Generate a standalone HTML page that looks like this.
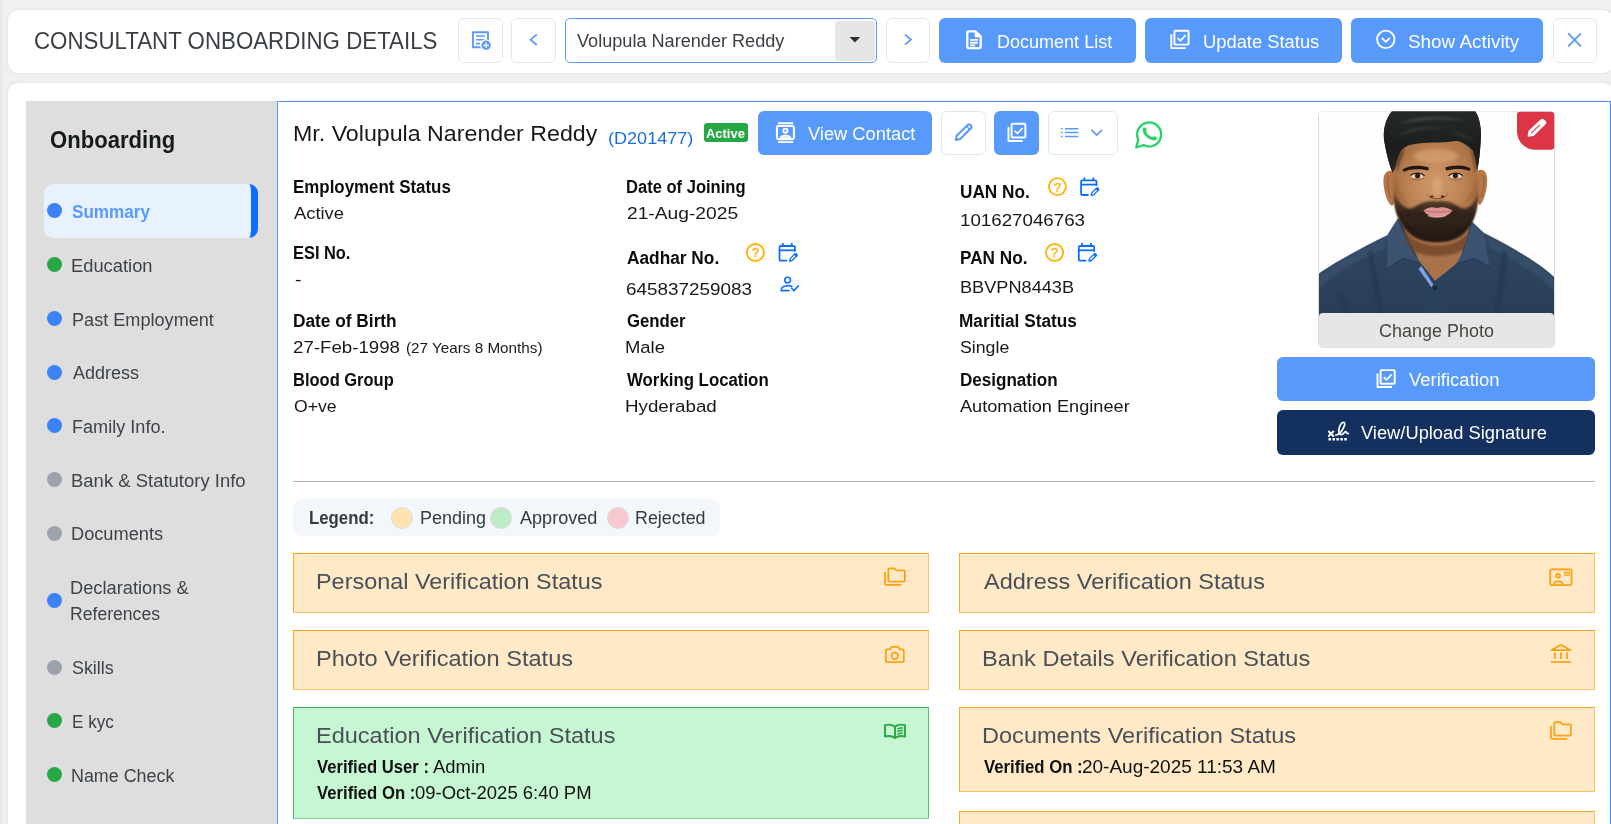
<!DOCTYPE html>
<html lang="en">
<head>
<meta charset="utf-8">
<title>Consultant Onboarding Details</title>
<style>
*{box-sizing:border-box;margin:0;padding:0}
html,body{width:1611px;height:824px;overflow:hidden}
body{background:#f0f0f0;font-family:"Liberation Sans",sans-serif;color:#212529;position:relative}
.a{position:absolute}
.t{position:absolute;white-space:nowrap;line-height:1;transform-origin:0 50%}
.card{position:absolute;background:#fff;border:1px solid #e8e8f2;border-radius:11px;box-shadow:0 0 1px #d9d9e6}
.bw{position:absolute;background:#fff;border:1px solid #e3e7f3;border-radius:6px}
.bb{position:absolute;background:#5899fc;border-radius:6px}
.dot{position:absolute;width:15px;height:15px;border-radius:50%}
.g{background:#28a745}.bl{background:#3b82f6}.gr{background:#9ca3af}
.vc{position:absolute;background:#ffe9c6;border:1px solid #ffc266;border-top-color:#f9a21a;border-left-color:#fbab2e}
.ok{background:#c6f6d2;border-color:#7fd495;border-top-color:#36aa55;border-left-color:#4cb868;border-right-color:#58bf73}
.lc{position:absolute;width:22px;height:22px;border-radius:50%;border:1px solid #dcdcdc}
svg{position:absolute;overflow:visible}
</style>
</head>
<body>
<!-- TOP BAR -->
<div class="a" style="left:0;top:0;width:4px;height:824px;background:linear-gradient(90deg,#e7e7e7,#efefef)"></div>
<div class="card" style="left:7px;top:9px;width:1607px;height:65px"></div>
<div class="bw" style="left:458px;top:18px;width:44.5px;height:45px"></div>
<div class="bw" style="left:511px;top:18px;width:44.6px;height:45px"></div>
<div class="a" style="left:565px;top:18px;width:312px;height:45px;border:1.5px solid #5899fc;border-radius:5px;background:#fff"></div>
<div class="a" style="left:835px;top:21px;width:40px;height:40px;background:#e6e6e6;border-radius:4px"></div>
<div class="bw" style="left:886px;top:18px;width:44px;height:45px"></div>
<div class="bb" style="left:939px;top:18px;width:197px;height:45px"></div>
<div class="bb" style="left:1145px;top:18px;width:197px;height:45px"></div>
<div class="bb" style="left:1351px;top:18px;width:192px;height:45px"></div>
<div class="bw" style="left:1552.5px;top:18px;width:44.5px;height:45px"></div>

<!-- MAIN CARD -->
<div class="card" style="left:7px;top:82px;width:1607px;height:760px"></div>

<!-- SIDEBAR -->
<div class="a" style="left:26px;top:101px;width:251px;height:723px;background:#dedede"></div>
<div class="a" style="left:44px;top:184px;width:214px;height:54px;background:#e8f1fe;border-radius:9px;border-right:7px solid #0d6efd"></div>
<div class="dot bl" style="left:47px;top:203px"></div>
<div class="dot g" style="left:47px;top:257px"></div>
<div class="dot bl" style="left:47px;top:311px"></div>
<div class="dot bl" style="left:47px;top:364.5px"></div>
<div class="dot bl" style="left:47px;top:418px"></div>
<div class="dot gr" style="left:47px;top:472px"></div>
<div class="dot gr" style="left:47px;top:525.5px"></div>
<div class="dot bl" style="left:46.5px;top:593px"></div>
<div class="dot gr" style="left:47px;top:659.5px"></div>
<div class="dot g" style="left:47px;top:713px"></div>
<div class="dot g" style="left:47px;top:767px"></div>

<!-- CONTENT PANEL -->
<div class="a" style="left:277px;top:101px;width:1334px;height:740px;border:1px solid #5899fc;border-right-color:#3d8bff;background:#fff"></div>
<div class="bb" style="left:758px;top:111px;width:174px;height:44px"></div>
<div class="bw" style="left:941px;top:111px;width:45px;height:44px"></div>
<div class="bb" style="left:994px;top:111px;width:45px;height:44px"></div>
<div class="bw" style="left:1048px;top:111px;width:70px;height:44px"></div>
<div class="a" style="left:704px;top:123px;width:44px;height:19px;background:#28a745;border-radius:3px"></div>

<!-- photo frame -->
<div class="a" style="left:1318px;top:110.5px;width:237px;height:237px;border:1px solid #dcdcdc;border-radius:5px;background:#fff"></div>
<div class="bb" style="left:1277px;top:357px;width:318px;height:44px"></div>
<div class="a" style="left:1277px;top:410px;width:318px;height:45px;background:#14305f;border-radius:6px"></div>

<!-- hr + legend -->
<div class="a" style="left:293px;top:481px;width:1302px;height:1px;background:#b5b5b5"></div>
<div class="a" style="left:293px;top:499px;width:427px;height:37px;background:#f3f6fa;border-radius:9px"></div>
<div class="lc" style="left:391px;top:506.5px;background:#ffe4ae"></div>
<div class="lc" style="left:490px;top:506.5px;background:#bcecc6"></div>
<div class="lc" style="left:606.5px;top:506.5px;background:#f8c9d1"></div>

<!-- verification cards -->
<div class="vc" style="left:293px;top:553px;width:636px;height:59.5px"></div>
<div class="vc" style="left:959px;top:553px;width:636px;height:59.5px"></div>
<div class="vc" style="left:293px;top:630px;width:636px;height:59.5px"></div>
<div class="vc" style="left:959px;top:630px;width:636px;height:59.5px"></div>
<div class="vc ok" style="left:293px;top:707px;width:636px;height:111.5px"></div>
<div class="vc" style="left:959px;top:707px;width:636px;height:85.2px"></div>
<div class="vc" style="left:959px;top:811.2px;width:636px;height:60px"></div>
<svg width="1611" height="824" viewBox="0 0 1611 824" style="left:0;top:0">
<defs>
  <clipPath id="pclip"><rect x="1319" y="111.5" width="235" height="212" rx="4"/></clipPath>
  <radialGradient id="skin" cx="0.5" cy="0.45" r="0.6">
    <stop offset="0" stop-color="#d09a6a"/><stop offset="0.5" stop-color="#bf8556"/><stop offset="0.85" stop-color="#a87044"/><stop offset="1" stop-color="#8e5c36"/>
  </radialGradient>
  <linearGradient id="shirt" x1="0" y1="0" x2="0" y2="1">
    <stop offset="0" stop-color="#31475f"/><stop offset="1" stop-color="#293d56"/>
  </linearGradient>
  <linearGradient id="beard" gradientUnits="userSpaceOnUse" x1="0" y1="186" x2="0" y2="243">
    <stop offset="0" stop-color="#6a4730" stop-opacity="0.25"/><stop offset="0.22" stop-color="#4a3224" stop-opacity="0.8"/><stop offset="0.45" stop-color="#33241c"/><stop offset="1" stop-color="#271b15"/>
  </linearGradient>
  <linearGradient id="hairg" x1="0" y1="0" x2="0" y2="1">
    <stop offset="0" stop-color="#262a27"/><stop offset="0.6" stop-color="#1b1e1c"/><stop offset="1" stop-color="#2a2620"/>
  </linearGradient>
  <filter id="soft" x="-10%" y="-10%" width="120%" height="120%"><feGaussianBlur stdDeviation="0.9"/></filter>
  <filter id="soft2" x="-15%" y="-15%" width="130%" height="130%"><feGaussianBlur stdDeviation="1.8"/></filter>
  <filter id="soft3" x="-10%" y="-10%" width="120%" height="120%"><feGaussianBlur stdDeviation="0.5"/></filter>
</defs>
<g clip-path="url(#pclip)">
  <rect x="1319" y="111" width="235" height="215" fill="#fefefe"/>
  <!-- shirt body -->
  <path d="M1319 273.5C1334 263 1362 247.5 1388 235L1398 219L1471 222L1484 233C1508 245 1538 262 1554 277V326H1319Z" fill="url(#shirt)"/>
  <!-- shirt shading / folds -->
  <path d="M1319 275C1336 263 1362 248 1387 236L1385 249C1360 258 1337 272 1319 288Z" fill="#3a5270" opacity="0.7" filter="url(#soft)"/>
  <path d="M1554 278C1538 263 1508 246 1485 234L1490 249C1514 258 1540 276 1554 292Z" fill="#3a5270" opacity="0.7" filter="url(#soft)"/>
  <path d="M1372 250C1376 270 1380 292 1384 314H1378C1374 292 1370 270 1368 252Z" fill="#233850" opacity="0.7" filter="url(#soft)"/>
  <path d="M1502 250C1500 270 1497 292 1494 314H1500C1504 292 1506 270 1507 252Z" fill="#233850" opacity="0.7" filter="url(#soft)"/>
  <path d="M1340 292C1346 300 1350 308 1352 314H1346C1344 308 1340 300 1336 296Z" fill="#22364e" opacity="0.6" filter="url(#soft)"/>
  <!-- neck -->
  <path d="M1402 224L1470 226L1459 262L1435 281L1420 263Z" fill="#a8734a"/>
  <path d="M1402 228C1416 250 1456 252 1470 230L1465 248C1452 259 1422 259 1406 247Z" fill="#6e4328" opacity="0.75" filter="url(#soft)"/>
  <!-- collar -->
  <path d="M1398 218L1387.6 234.6L1387.6 268.6L1403 258.5L1420.8 263C1410 250 1402 236 1398 218Z" fill="#3b5370"/>
  <path d="M1471.4 221L1484 233L1489.6 267L1474 258.5L1455.6 264.6C1464 252 1469 238 1471.4 221Z" fill="#3b5370"/>
  <path d="M1387.6 268.6L1403 258.5L1420.8 263" fill="none" stroke="#22364e" stroke-width="1.2" opacity="0.8"/>
  <path d="M1489.6 267L1474 258.5L1455.6 264.6" fill="none" stroke="#22364e" stroke-width="1.2" opacity="0.8"/>
  <!-- placket -->
  <path d="M1420.8 263L1435 281L1455.6 264.6L1451 274L1441.5 283.5V314H1428V285Z" fill="#2a415c"/>
  <path d="M1421.4 266L1433.4 284.4L1431.4 287.2L1418.6 269Z" fill="#7da3e0"/>
  <circle cx="1434.8" cy="287.6" r="2.2" fill="#1a2738"/>
  <!-- ears -->
  <path d="M1394 172C1388 168.5 1383 173 1383.4 182C1384 192 1387 202 1391 205.4C1393 206 1394.6 204 1394.6 200Z" fill="#b57648"/>
  <path d="M1477.6 171C1483 167.5 1487.6 172 1487.2 181C1486.8 191 1484 200.5 1480.5 204.4C1478.6 205.4 1477 203.4 1477 199.6Z" fill="#b57648"/>
  <path d="M1389 176C1386.6 180 1387.6 192 1391 198" stroke="#8e5834" stroke-width="1.4" fill="none" opacity="0.6" filter="url(#soft3)"/>
  <path d="M1482.6 175C1485 179 1484 191 1480.6 197" stroke="#8e5834" stroke-width="1.4" fill="none" opacity="0.6" filter="url(#soft3)"/>
  <!-- hair back -->
  <path d="M1392.8 173C1389.4 166 1386.4 153 1384.6 143C1382.4 131 1385 120 1392 111H1475C1480 118 1481.8 130 1480.6 142C1480 152 1479 163 1477 171L1476 150H1395Z" fill="#1e211f"/>
  <!-- face -->
  <path d="M1394 165L1394 200C1395 215 1402 228 1412 235C1420 240 1428 241.5 1437 241.5C1446 241.5 1454 240 1461 235C1471 228 1477 215 1477.8 200L1477.8 165C1477 150 1465 138 1437 138C1408 138 1395 150 1394 165Z" fill="url(#skin)"/>
  <ellipse cx="1436" cy="156" rx="22" ry="7" fill="#e0aa7a" opacity="0.5" filter="url(#soft2)"/>
  <!-- beard -->
  <path d="M1393.8 186C1395.6 198 1400 205 1407 208C1411 209.4 1414 207.4 1418 205C1424 201.5 1431 200.3 1437 201.4C1443 200.3 1450 201.5 1456 205C1460 207.4 1463 209.4 1467 208C1474 205 1476.6 198 1478 186L1477.8 200C1477 215 1471 228 1461 235C1454 240 1446 241.7 1437 241.7C1428 241.7 1420 240 1412 235C1402 228 1395 215 1394 200Z" fill="url(#beard)" filter="url(#soft)"/>
  <path d="M1400 212C1404 226 1414 236 1437 238.6C1460 236 1470 226 1474 212C1470 232 1458 241.4 1437 241.6C1416 241.4 1404 232 1400 212Z" fill="#241914" filter="url(#soft)"/>
  <!-- lips -->
  <path d="M1423.4 210.6C1429 206.2 1433.6 207.2 1437 208.2C1440.4 207.2 1446 206.2 1452.4 210.6C1447 219.4 1429 219.4 1423.4 210.6Z" fill="#dc9290"/>
  <path d="M1423.6 210.8C1431 212.4 1444 212.4 1452.2 210.8" stroke="#b06a66" stroke-width="0.9" fill="none"/>
  <path d="M1428 215.4C1433 217.4 1442 217.4 1446 215.4" stroke="#f0b4b0" stroke-width="1.6" fill="none" opacity="0.7" filter="url(#soft3)"/>
  <!-- nose -->
  <ellipse cx="1437" cy="186" rx="4.4" ry="10" fill="#e2ab7c" opacity="0.55" filter="url(#soft2)"/>
  <path d="M1427 192.6C1427.6 198.6 1433 197.6 1437 198.8C1441 197.6 1446.6 198.6 1447.6 192.6C1448.4 201.4 1426.4 201.4 1427 192.6Z" fill="#6e4024" filter="url(#soft3)"/>
  <ellipse cx="1431.6" cy="196.6" rx="2" ry="1.1" fill="#4a2a18" filter="url(#soft3)"/>
  <ellipse cx="1442.6" cy="196.6" rx="2" ry="1.1" fill="#4a2a18" filter="url(#soft3)"/>
  <!-- cheek shade -->
  <path d="M1395 176C1398 190 1402 198 1408 204C1400 202 1395.6 194 1394 182Z" fill="#8e5a36" opacity="0.55" filter="url(#soft2)"/>
  <path d="M1477 176C1474 190 1470 198 1464 204C1472 202 1476.4 194 1477.8 182Z" fill="#8e5a36" opacity="0.55" filter="url(#soft2)"/>
  <!-- brows -->
  <path d="M1402.6 169.6C1408 165 1420 164.6 1428.8 167.4L1428.2 170.6C1420 168.6 1410 168.8 1403.4 171.8Z" fill="#231712" filter="url(#soft3)"/>
  <path d="M1445.4 167.4C1454 164.6 1465 164.6 1470.4 168.6L1469.6 171C1463 168.4 1454 168.6 1446 170.6Z" fill="#231712" filter="url(#soft3)"/>
  <!-- eyes -->
  <ellipse cx="1417.2" cy="176" rx="6.2" ry="2.5" fill="#e8d8cc"/>
  <ellipse cx="1455.6" cy="176" rx="6.2" ry="2.5" fill="#e8d8cc"/>
  <circle cx="1417.6" cy="175.8" r="2.6" fill="#2e1b11"/>
  <circle cx="1455.4" cy="175.8" r="2.6" fill="#2e1b11"/>
  <path d="M1410.4 175.6C1414 172.4 1421 172.4 1424.6 175.8" stroke="#261810" stroke-width="1.3" fill="none"/>
  <path d="M1448.6 175.8C1452 172.4 1459 172.4 1462.6 175.6" stroke="#261810" stroke-width="1.3" fill="none"/>
  <path d="M1411 178.4C1415 180.4 1421 180.4 1424 178.2" stroke="#8a5636" stroke-width="0.9" fill="none" opacity="0.7"/>
  <path d="M1449 178.2C1452 180.4 1458 180.4 1462 178.4" stroke="#8a5636" stroke-width="0.9" fill="none" opacity="0.7"/>
  <!-- hair -->
  <path d="M1392.8 173C1389.4 166 1386.4 153 1384.6 143C1382.4 131 1385 120 1392 111H1475C1480 118 1481.8 130 1480.6 142C1480 152 1479 163 1477 171C1476.2 163 1475 157 1473.4 152.8C1471 146 1467 141.4 1463 140.8C1455 140.4 1447 142.5 1439 142.5C1428 142.5 1418 143 1409.7 145C1404 147 1401 150 1400 153C1397.6 158 1396.6 162 1396 165C1395 168 1394 171 1392.8 173Z" fill="url(#hairg)"/>
  <path d="M1396 166C1397 158 1400 151 1405 147L1402 158C1400 162 1398.6 166 1397.6 172Z" fill="#3a2a20" opacity="0.6" filter="url(#soft)"/>
  <path d="M1476.4 168C1476 160 1474 153 1470 148L1472.6 158C1474 162 1474.6 166 1475 172Z" fill="#3a2a20" opacity="0.6" filter="url(#soft)"/>
  <path d="M1400 124C1412 116 1440 113.6 1466 121C1448 118.6 1424 119.4 1400 124Z" fill="#4a504a" opacity="0.65" filter="url(#soft)"/>
  <path d="M1396 138C1404 128 1424 124 1446 128C1428 128.4 1410 131 1396 138Z" fill="#40453f" opacity="0.5" filter="url(#soft)"/>
  <path d="M1450 132C1460 132 1470 136 1476 142C1468 138.6 1460 136 1450 132Z" fill="#40453f" opacity="0.5" filter="url(#soft)"/>
</g>
<rect x="1319" y="313" width="235" height="34.3" rx="4" fill="#e6e6e6"/>
<!-- top bar: doc-plus -->
<g fill="none" stroke="#5a9bfa" stroke-width="1.9" stroke-linejoin="round" stroke-linecap="butt">
  <path d="M481 47.2H473V32.2H488V41"/>
  <path d="M476 36H485M476 39.8H484M476 43.6H480" stroke-width="1.6"/>
</g>
<circle cx="486.1" cy="45.3" r="5.9" fill="#fff"/>
<circle cx="486.1" cy="45.3" r="4.7" fill="#5a9bfa"/>
<path d="M483.3 45.3H488.9M486.1 42.5V48.1" stroke="#fff" stroke-width="1.3" fill="none"/>
<!-- chevrons -->
<path d="M536.8 34.4L530.6 39.7L536.8 45" fill="none" stroke="#5a9bfa" stroke-width="1.8"/>
<path d="M905 34.6L911 39.6L905 44.6" fill="none" stroke="#5a9bfa" stroke-width="1.8"/>
<!-- select arrow -->
<path d="M849.6 37H860.2L854.9 42.4Z" fill="#2f2f2f"/>
<!-- Document List icon -->
<g fill="none" stroke="#fff" stroke-width="2.3" stroke-linejoin="round">
  <path d="M968.8 31.3H975.4L980.7 36.4V46.6Q980.7 48.1 979.2 48.1H968.8Q967.3 48.1 967.3 46.6V32.8Q967.3 31.3 968.8 31.3Z"/>
  <path d="M975.2 31.6V36.9H980.4Z" fill="#fff" stroke-width="1"/>
  <path d="M970.2 39.9H977.9M970.2 42.75H977.9M970.2 45.4H975.1" stroke-width="1.9"/>
</g>
<!-- Update Status icon (stacked check) -->
<g fill="none" stroke="#fff" stroke-width="1.95" stroke-linejoin="round">
  <rect x="1174.4" y="30.8" width="14.2" height="13.8" rx="1"/>
  <path d="M1171.3 34.2V48.1H1185.8"/>
  <path d="M1177.6 38L1180.4 40.8L1185.6 35.2" stroke-width="1.7"/>
</g>
<!-- Show Activity icon -->
<g fill="none" stroke="#fff" stroke-width="1.8">
  <circle cx="1385.8" cy="39.4" r="8.7"/>
  <path d="M1381.8 38L1385.8 41.8L1389.8 38" stroke-linejoin="round"/>
</g>
<!-- close X -->
<path d="M1568.2 33.3L1581 46.3M1581 33.3L1568.2 46.3" stroke="#5a9bfa" stroke-width="1.9" fill="none"/>

<!-- View Contact icon -->
<g fill="none" stroke="#fff" stroke-width="2" stroke-linejoin="round">
  <rect x="776.9" y="125.9" width="17" height="13.3" rx="1.4"/>
  <path d="M777.9 123.2H793.2M777.9 142.1H793.2" stroke-width="1.9"/>
  <circle cx="785.4" cy="130.7" r="2.1" stroke-width="1.9"/>
  <path d="M779.8 138.6C781.4 134.6 789.4 134.6 791 138.6Z" stroke-width="1.5" fill="#fff" fill-opacity="0.75"/>
</g>
<!-- edit pencil (blue) -->
<path d="M955.9 139.9L956.8 135.5L968 124.8Q969.1 123.9 970.1 124.9L971.3 126.1Q972.2 127.1 971.2 128.1L960.2 139Z" fill="none" stroke="#5a9bfa" stroke-width="2.1" stroke-linejoin="round"/>
<path d="M966.6 126.4L969.8 129.6" stroke="#5a9bfa" stroke-width="1.4" fill="none"/>
<!-- blue button stacked check -->
<g fill="none" stroke="#fff" stroke-width="1.95" stroke-linejoin="round">
  <rect x="1011.6" y="123.8" width="13.8" height="13.6" rx="1"/>
  <path d="M1008.5 127.2V140.9H1022.8"/>
  <path d="M1014.8 130.8L1017.5 133.5L1022.6 128.2" stroke-width="1.7"/>
</g>
<!-- list + chevron -->
<g fill="none" stroke="#5a9bfa" stroke-width="1.5">
  <path d="M1065 128.8H1078.4M1065 132.6H1078.4M1065 136.4H1078.4"/>
  <path d="M1060.9 128.8H1062.6M1060.9 132.6H1062.6M1060.9 136.4H1062.6"/>
  <path d="M1091.4 129.8L1096.7 135L1102 129.8" stroke-width="1.7"/>
</g>
<!-- WhatsApp -->
<g>
  <path d="M1136.2 147.5L1138.3 139.6A12 12 0 1 1 1143.6 145.1Z" fill="#fff" stroke="#25d366" stroke-width="2.3" stroke-linejoin="round"/>
  <path d="M1144.3 130.2C1144.4 134 1149.4 138.9 1153.8 138.9" fill="none" stroke="#25d366" stroke-width="3" stroke-linecap="round"/>
  <ellipse cx="1144.6" cy="129.8" rx="2" ry="2.4" fill="#25d366"/>
  <ellipse cx="1154.3" cy="138.3" rx="2.5" ry="2" fill="#25d366"/>
</g>

<g transform="translate(1057.4 186.6)">
    <circle cx="0" cy="0" r="8.5" fill="none" stroke="#ffb507" stroke-width="1.9"/>
    <text x="0" y="4.9" text-anchor="middle" font-family="Liberation Sans, sans-serif" font-size="13.5" fill="#ffb507" stroke="#ffb507" stroke-width="0.35">?</text>
</g>
<g transform="translate(755.4 252.5)">
    <circle cx="0" cy="0" r="8.5" fill="none" stroke="#ffb507" stroke-width="1.9"/>
    <text x="0" y="4.9" text-anchor="middle" font-family="Liberation Sans, sans-serif" font-size="13.5" fill="#ffb507" stroke="#ffb507" stroke-width="0.35">?</text>
</g>
<g transform="translate(1054.6 252.5)">
    <circle cx="0" cy="0" r="8.5" fill="none" stroke="#ffb507" stroke-width="1.9"/>
    <text x="0" y="4.9" text-anchor="middle" font-family="Liberation Sans, sans-serif" font-size="13.5" fill="#ffb507" stroke="#ffb507" stroke-width="0.35">?</text>
</g>
<g transform="translate(1080.2 177.4)" fill="none" stroke="#0d6efd" stroke-width="1.8" stroke-linejoin="round">
    <path d="M8.4 17.6H2.2Q0.9 17.6 0.9 16.3V4.2Q0.9 2.9 2.2 2.9H15Q16.3 2.9 16.3 4.2V8.6"/>
    <path d="M0.9 7.2H16.3"/>
    <path d="M4.2 0V3.4M13.1 0V3.4"/>
    <path d="M11 18L11.6 15.5L16.3 10.8Q17 10.2 17.7 10.8L18.2 11.3Q18.8 12 18.2 12.7L13.5 17.4Z" fill="#fff" stroke-width="1.3"/>
    <path d="M15.4 11.4L16.4 10.6Q17 10.2 17.7 10.8L18.2 11.3Q18.8 12 18.3 12.6L17.6 13.6Z" fill="#0d6efd" stroke-width="0.6"/>
</g>
<g transform="translate(778.6 243.1)" fill="none" stroke="#0d6efd" stroke-width="1.8" stroke-linejoin="round">
    <path d="M8.4 17.6H2.2Q0.9 17.6 0.9 16.3V4.2Q0.9 2.9 2.2 2.9H15Q16.3 2.9 16.3 4.2V8.6"/>
    <path d="M0.9 7.2H16.3"/>
    <path d="M4.2 0V3.4M13.1 0V3.4"/>
    <path d="M11 18L11.6 15.5L16.3 10.8Q17 10.2 17.7 10.8L18.2 11.3Q18.8 12 18.2 12.7L13.5 17.4Z" fill="#fff" stroke-width="1.3"/>
    <path d="M15.4 11.4L16.4 10.6Q17 10.2 17.7 10.8L18.2 11.3Q18.8 12 18.3 12.6L17.6 13.6Z" fill="#0d6efd" stroke-width="0.6"/>
</g>
<g transform="translate(1077.9 243.1)" fill="none" stroke="#0d6efd" stroke-width="1.8" stroke-linejoin="round">
    <path d="M8.4 17.6H2.2Q0.9 17.6 0.9 16.3V4.2Q0.9 2.9 2.2 2.9H15Q16.3 2.9 16.3 4.2V8.6"/>
    <path d="M0.9 7.2H16.3"/>
    <path d="M4.2 0V3.4M13.1 0V3.4"/>
    <path d="M11 18L11.6 15.5L16.3 10.8Q17 10.2 17.7 10.8L18.2 11.3Q18.8 12 18.2 12.7L13.5 17.4Z" fill="#fff" stroke-width="1.3"/>
    <path d="M15.4 11.4L16.4 10.6Q17 10.2 17.7 10.8L18.2 11.3Q18.8 12 18.3 12.6L17.6 13.6Z" fill="#0d6efd" stroke-width="0.6"/>
</g>
<!-- user-check -->
<g fill="none" stroke="#0d6efd" stroke-width="1.6" stroke-linejoin="round" stroke-linecap="round">
  <circle cx="787.6" cy="280.1" r="2.9"/>
  <path d="M781.4 290.6V289.6C781.4 285.4 790 285 792 286.6"/>
  <path d="M781.4 290.6H789"/>
  <path d="M791.6 288.2L794 290.6L798.4 285.8"/>
</g>
<!-- red badge -->
<path d="M1520 111.7H1551Q1554.2 111.7 1554.2 114.9V146.6Q1554.2 149.8 1551 149.8H1535.5A18.5 18.5 0 0 1 1517 131.3V114.7Q1517 111.7 1520 111.7Z" fill="#dc3545"/>
<!-- red badge pencil -->
<path d="M1528.2 136.2L1529.1 131.2L1541.2 119.7Q1542.4 118.8 1543.5 119.8L1545.3 121.6Q1546.3 122.7 1545.3 123.9L1533.4 135.4Z" fill="#fff" stroke="#fff" stroke-width="1.2" stroke-linejoin="round"/>
<path d="M1531.2 133.2L1539.8 124.9" stroke="#dc3545" stroke-width="1.1" fill="none"/>
<!-- Verification button icon -->
<g fill="none" stroke="#fff" stroke-width="1.95" stroke-linejoin="round">
  <rect x="1380.6" y="370.1" width="14.1" height="13.6" rx="1"/>
  <path d="M1377.5 373.4V387H1392"/>
  <path d="M1383.8 377.2L1386.5 379.9L1391.6 374.4" stroke-width="1.7"/>
</g>
<!-- signature icon -->
<g fill="none" stroke="#fff" stroke-width="1.7" stroke-linecap="round" stroke-linejoin="round">
  <path d="M1328.8 431.5L1333.3 436M1333.3 431.5L1328.8 436" stroke-width="1.9"/>
  <path d="M1335.8 435C1338.6 435 1340.6 433 1342.6 429.5C1344.6 426 1345.7 422.8 1343.7 422.4C1341.1 422 1338.8 427 1338.8 431C1338.8 434 1340.5 435.2 1342.4 434.2C1344 433.4 1344.6 431.7 1345.6 431.7C1346.6 431.7 1346.6 433.8 1348.3 433.6"/>
  <path d="M1328.5 439.3H1347.4" stroke-dasharray="2.5 1.45" stroke-linecap="butt" stroke-width="2.4"/>
</g>
<!-- card icons -->
<g transform="translate(884.1 567.3)" fill="none" stroke="#ffa011" stroke-width="1.75" stroke-linejoin="round">
    <path d="M4.2 2.2Q4.2 1 5.4 1H10.2L12.2 3.2H19.6Q20.8 3.2 20.8 4.4V13.2Q20.8 14.4 19.6 14.4H5.4Q4.2 14.4 4.2 13.2Z"/>
    <path d="M0.9 4.8V16.4Q0.9 17.6 2.1 17.6H17.2"/>
</g>
<g transform="translate(1550.1 721.2)" fill="none" stroke="#ffa011" stroke-width="1.75" stroke-linejoin="round">
    <path d="M4.2 2.2Q4.2 1 5.4 1H10.2L12.2 3.2H19.6Q20.8 3.2 20.8 4.4V13.2Q20.8 14.4 19.6 14.4H5.4Q4.2 14.4 4.2 13.2Z"/>
    <path d="M0.9 4.8V16.4Q0.9 17.6 2.1 17.6H17.2"/>
</g>
<!-- id card -->
<g fill="none" stroke="#ffa011" stroke-width="1.75" stroke-linejoin="round">
  <rect x="1550.2" y="569.4" width="21.4" height="15.6" rx="1.6"/>
  <circle cx="1558.2" cy="575.8" r="1.9"/>
  <path d="M1553.4 584.8C1554.4 580.2 1562 580.2 1563 584.8"/>
  <rect x="1564.6" y="572" width="4.8" height="3.4" stroke-width="1"/>
  <path d="M1564.6 572L1567 574L1569.4 572" stroke-width="0.9"/>
</g>
<!-- camera -->
<g fill="none" stroke="#ffa011" stroke-width="1.75" stroke-linejoin="round">
  <path d="M887.6 649.4H890L891.6 646.8H898L899.6 649.4H902Q903.8 649.4 903.8 651.2V660.2Q903.8 662 902 662H887.6Q885.8 662 885.8 660.2V651.2Q885.8 649.4 887.6 649.4Z"/>
  <circle cx="894.8" cy="655.8" r="3.3"/>
</g>
<!-- bank -->
<g fill="none" stroke="#ffa011" stroke-width="1.75" stroke-linejoin="round">
  <path d="M1551.4 650.2L1560.9 644.8L1570.4 650.2Z"/>
  <path d="M1554.8 652.6V659M1560.9 652.6V659M1567 652.6V659"/>
  <path d="M1551 662H1570.8" stroke-width="1.7"/>
</g>
<!-- book (green) -->
<g fill="none" stroke="#27a644" stroke-width="1.9" stroke-linejoin="round" transform="translate(0 0.5)">
  <path d="M895 726.2C892.6 724.2 888.4 723.8 885 724.6V736C888.4 735.2 892.6 735.6 895 737.6C897.4 735.6 901.6 735.2 905 736V724.6C901.6 723.8 897.4 724.2 895 726.2Z"/>
  <path d="M895 726.2V737.4"/>
  <path d="M897.4 728.4C899 727.6 901 727.4 902.8 727.6M897.4 731C899 730.2 901 730 902.8 730.2M897.4 733.6C899 732.8 901 732.6 902.8 732.8" stroke-width="1.5"/>
</g>
</svg>
<!-- TEXT -->
<div class="t" style="left:34.2px;top:30px;font-size:23.5px;color:#3a3f45;transform:scaleX(0.9487)">CONSULTANT ONBOARDING DETAILS</div>
<div class="t" style="left:577.0px;top:33px;font-size:17.5px;color:#3a3f45;transform:scaleX(1.0347)">Volupula Narender Reddy</div>
<div class="t" style="left:996.5px;top:34px;font-size:17.5px;color:#ffffff;transform:scaleX(1.0297)">Document List</div>
<div class="t" style="left:1202.5px;top:34px;font-size:17.5px;color:#ffffff;transform:scaleX(1.0483)">Update Status</div>
<div class="t" style="left:1408.1px;top:34px;font-size:17.5px;color:#ffffff;transform:scaleX(1.0794)">Show Activity</div>
<div class="t" style="left:50.1px;top:129px;font-size:23.0px;color:#16191c;font-weight:bold;transform:scaleX(0.9603)">Onboarding</div>
<div class="t" style="left:72.4px;top:204px;font-size:17.5px;color:#5b9bff;font-weight:bold;transform:scaleX(0.9776)">Summary</div>
<div class="t" style="left:71.4px;top:258px;font-size:17.5px;color:#3d4349;transform:scaleX(1.0473)">Education</div>
<div class="t" style="left:71.9px;top:312px;font-size:17.5px;color:#3d4349;transform:scaleX(1.0346)">Past Employment</div>
<div class="t" style="left:72.8px;top:365px;font-size:17.5px;color:#3d4349;transform:scaleX(1.0268)">Address</div>
<div class="t" style="left:71.9px;top:419px;font-size:17.5px;color:#3d4349;transform:scaleX(1.0340)">Family Info.</div>
<div class="t" style="left:71.1px;top:473px;font-size:17.5px;color:#3d4349;transform:scaleX(1.0560)">Bank &amp; Statutory Info</div>
<div class="t" style="left:71.2px;top:526px;font-size:17.5px;color:#3d4349;transform:scaleX(1.0398)">Documents</div>
<div class="t" style="left:70.4px;top:580px;font-size:17.5px;color:#3d4349;transform:scaleX(1.0433)">Declarations &amp;</div>
<div class="t" style="left:70.2px;top:606px;font-size:17.5px;color:#3d4349;transform:scaleX(1.0056)">References</div>
<div class="t" style="left:71.5px;top:660px;font-size:17.5px;color:#3d4349;transform:scaleX(1.0216)">Skills</div>
<div class="t" style="left:71.5px;top:714px;font-size:17.5px;color:#3d4349;transform:scaleX(0.9790)">E kyc</div>
<div class="t" style="left:71.3px;top:768px;font-size:17.5px;color:#3d4349;transform:scaleX(1.0215)">Name Check</div>
<div class="t" style="left:293.0px;top:123px;font-size:22.6px;color:#16191c;transform:scaleX(1.0268)">Mr. Volupula Narender Reddy</div>
<div class="t" style="left:608.2px;top:130px;font-size:17.4px;color:#1a6fd6;transform:scaleX(1.0385)">(D201477)</div>
<div class="t" style="left:706.2px;top:127px;font-size:13.5px;color:#ffffff;font-weight:bold;transform:scaleX(0.9594)">Active</div>
<div class="t" style="left:808.3px;top:126px;font-size:17.5px;color:#ffffff;transform:scaleX(1.0444)">View Contact</div>
<div class="t" style="left:293.3px;top:179px;font-size:17.5px;color:#0c0d0e;font-weight:bold;transform:scaleX(0.9660)">Employment Status</div>
<div class="t" style="left:293.9px;top:205px;font-size:17.4px;color:#16191c;transform:scaleX(1.0553)">Active</div>
<div class="t" style="left:293.3px;top:245px;font-size:17.5px;color:#0c0d0e;font-weight:bold;transform:scaleX(0.9374)">ESI No.</div>
<div class="t" style="left:294.7px;top:271px;font-size:17.4px;color:#16191c;transform:scaleX(1.1299)">-</div>
<div class="t" style="left:293.2px;top:313px;font-size:17.5px;color:#0c0d0e;font-weight:bold;transform:scaleX(0.9874)">Date of Birth</div>
<div class="t" style="left:293.1px;top:339px;font-size:17.4px;color:#16191c;transform:scaleX(1.0746)">27-Feb-1998</div>
<div class="t" style="left:406.4px;top:341px;font-size:14.5px;color:#16191c;transform:scaleX(1.0516)">(27 Years 8 Months)</div>
<div class="t" style="left:293.3px;top:372px;font-size:17.5px;color:#0c0d0e;font-weight:bold;transform:scaleX(0.9423)">Blood Group</div>
<div class="t" style="left:293.8px;top:398px;font-size:17.4px;color:#16191c;transform:scaleX(1.0135)">O+ve</div>
<div class="t" style="left:626.3px;top:179px;font-size:17.5px;color:#0c0d0e;font-weight:bold;transform:scaleX(0.9458)">Date of Joining</div>
<div class="t" style="left:626.8px;top:205px;font-size:17.4px;color:#16191c;transform:scaleX(1.1050)">21-Aug-2025</div>
<div class="t" style="left:626.8px;top:250px;font-size:17.5px;color:#0c0d0e;font-weight:bold;transform:scaleX(0.9876)">Aadhar No.</div>
<div class="t" style="left:626.4px;top:281px;font-size:17.4px;color:#16191c;transform:scaleX(1.0862)">645837259083</div>
<div class="t" style="left:626.6px;top:313px;font-size:17.5px;color:#0c0d0e;font-weight:bold;transform:scaleX(0.9568)">Gender</div>
<div class="t" style="left:625.4px;top:339px;font-size:17.4px;color:#16191c;transform:scaleX(1.0603)">Male</div>
<div class="t" style="left:627.3px;top:372px;font-size:17.5px;color:#0c0d0e;font-weight:bold;transform:scaleX(0.9607)">Working Location</div>
<div class="t" style="left:625.2px;top:398px;font-size:17.4px;color:#16191c;transform:scaleX(1.0785)">Hyderabad</div>
<div class="t" style="left:959.7px;top:184px;font-size:17.5px;color:#0c0d0e;font-weight:bold;transform:scaleX(0.9824)">UAN No.</div>
<div class="t" style="left:959.7px;top:212px;font-size:17.4px;color:#16191c;transform:scaleX(1.0770)">101627046763</div>
<div class="t" style="left:959.7px;top:250px;font-size:17.5px;color:#0c0d0e;font-weight:bold;transform:scaleX(0.9814)">PAN No.</div>
<div class="t" style="left:959.6px;top:279px;font-size:17.4px;color:#16191c;transform:scaleX(1.0442)">BBVPN8443B</div>
<div class="t" style="left:959.4px;top:313px;font-size:17.5px;color:#0c0d0e;font-weight:bold;transform:scaleX(0.9852)">Maritial Status</div>
<div class="t" style="left:960.1px;top:339px;font-size:17.4px;color:#16191c;transform:scaleX(1.0190)">Single</div>
<div class="t" style="left:959.5px;top:372px;font-size:17.5px;color:#0c0d0e;font-weight:bold;transform:scaleX(0.9747)">Designation</div>
<div class="t" style="left:960.2px;top:398px;font-size:17.4px;color:#16191c;transform:scaleX(1.0447)">Automation Engineer</div>
<div class="t" style="left:1379.2px;top:323px;font-size:17.5px;color:#4a4540;transform:scaleX(1.0266)">Change Photo</div>
<div class="t" style="left:1409.0px;top:372px;font-size:17.5px;color:#ffffff;transform:scaleX(1.0566)">Verification</div>
<div class="t" style="left:1361.3px;top:425px;font-size:17.5px;color:#ffffff;transform:scaleX(1.0456)">View/Upload Signature</div>
<div class="t" style="left:308.6px;top:510px;font-size:17.5px;color:#333a40;font-weight:bold;transform:scaleX(0.9586)">Legend:</div>
<div class="t" style="left:419.7px;top:510px;font-size:17.5px;color:#333a40;transform:scaleX(1.0273)">Pending</div>
<div class="t" style="left:519.8px;top:510px;font-size:17.5px;color:#333a40;transform:scaleX(1.0331)">Approved</div>
<div class="t" style="left:635.0px;top:510px;font-size:17.5px;color:#333a40;transform:scaleX(1.0210)">Rejected</div>
<div class="t" style="left:316.0px;top:571px;font-size:22.6px;color:#495057;transform:scaleX(1.0366)">Personal Verification Status</div>
<div class="t" style="left:315.9px;top:648px;font-size:22.6px;color:#495057;transform:scaleX(1.0442)">Photo Verification Status</div>
<div class="t" style="left:315.9px;top:725px;font-size:22.6px;color:#495057;transform:scaleX(1.0410)">Education Verification Status</div>
<div class="t" style="left:316.6px;top:759px;font-size:17.5px;color:#111;font-weight:bold;transform:scaleX(0.9514)">Verified User :</div>
<div class="t" style="left:433.4px;top:759px;font-size:17.5px;color:#111;transform:scaleX(1.0541)">Admin</div>
<div class="t" style="left:316.6px;top:785px;font-size:17.5px;color:#111;font-weight:bold;transform:scaleX(0.9539)">Verified On :</div>
<div class="t" style="left:415.1px;top:785px;font-size:17.5px;color:#111;transform:scaleX(1.0554)">09-Oct-2025 6:40 PM</div>
<div class="t" style="left:983.6px;top:571px;font-size:22.6px;color:#495057;transform:scaleX(1.0403)">Address Verification Status</div>
<div class="t" style="left:981.7px;top:648px;font-size:22.6px;color:#495057;transform:scaleX(1.0457)">Bank Details Verification Status</div>
<div class="t" style="left:981.7px;top:725px;font-size:22.6px;color:#495057;transform:scaleX(1.0423)">Documents Verification Status</div>
<div class="t" style="left:983.5px;top:759px;font-size:17.5px;color:#111;font-weight:bold;transform:scaleX(0.9575)">Verified On :</div>
<div class="t" style="left:1081.5px;top:759px;font-size:17.5px;color:#111;transform:scaleX(1.0849)">20-Aug-2025 11:53 AM</div>
</body>
</html>
